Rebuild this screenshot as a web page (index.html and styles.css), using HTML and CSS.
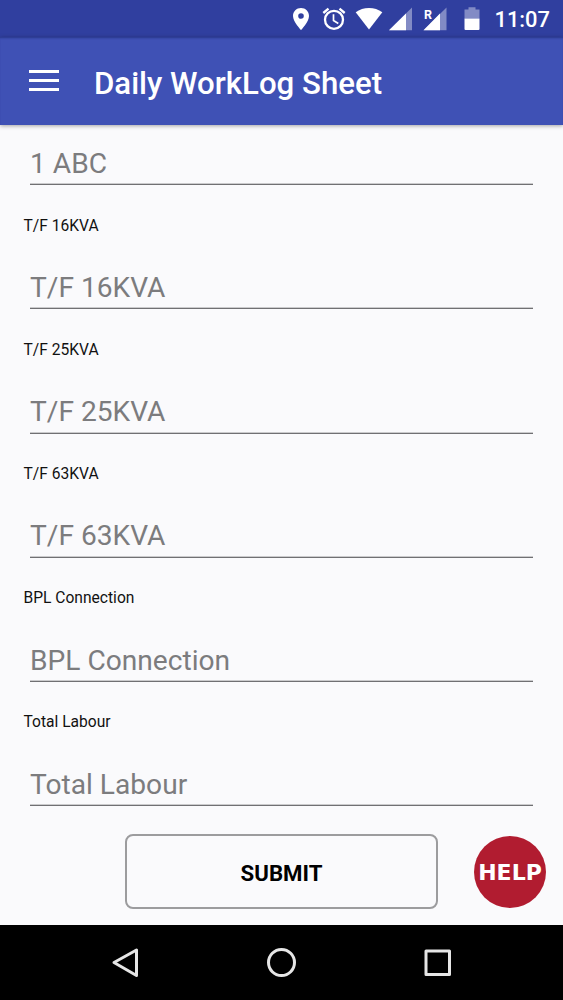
FILE: index.html
```
<!DOCTYPE html>
<html lang="en">
<head>
    <meta charset="UTF-8">
    <meta name="viewport" content="width=device-width, initial-scale=1.0">
    <title>Daily WorkLog Sheet</title>
    <link rel="stylesheet" href="styles.css">
</head>
<body>
    <div class="status-bar">
        <svg class="status-icons" width="204" height="37" viewBox="0 0 204 37" fill="#fff">
            <!-- Location -->
            <path fill-rule="evenodd" d="M17 8c-4.500 0-8 3.500-8 8 0 5.800 8 14 8 14s8-8.200 8-14c0-4.500-3.500-8-8-8zm0 5.200a2.800 2.800 0 1 1 0 5.600 2.800 2.800 0 0 1 0-5.600z"/>
            <!-- Alarm -->
            <g fill="none" stroke="#fff" stroke-width="2.300">
                <circle cx="50" cy="19.800" r="9"/>
                <path d="M49.500 14.200v6.300l4.800 2.900" stroke-width="1.700"/>
                <path d="M39.300 13l5.200-4.400M60.700 13l-5.200-4.400"/>
            </g>
            <!-- Wifi -->
            <path d="M71.700 12.300C79 6.600 91 6.600 98.300 12.300L85 29.600z"/>
            <!-- Signal -->
            <path d="M105 30.300L128 7.500v22.800z" opacity=".4"/>
            <path d="M105 30.300L122 13.500v16.800z"/>
            <!-- Roaming signal -->
            <path d="M139.500 30.300L162.500 7.500v22.800z" opacity=".4"/>
            <path d="M139.500 30.300L156 13.500v16.800z"/>
            <text class="roaming" x="140" y="18.500">R</text>
            <!-- Battery -->
            <path d="M180.500 18.500v-9h4V7.300h7v2.200h4v9z" opacity=".4"/>
            <path d="M180.500 18.500h15V29a1 1 0 0 1-1 1h-13a1 1 0 0 1-1-1z"/>
        </svg>
        <span class="clock">11:07</span>
    </div>

    <header class="toolbar">
        <button class="menu-button" aria-label="Menu">
            <span></span>
            <span></span>
            <span></span>
        </button>
        <h1>Daily WorkLog Sheet</h1>
    </header>

    <form class="worklog-form">
        <input type="text" placeholder="1 ABC">

        <label for="tf16">T/F 16KVA</label>
        <input type="text" id="tf16" placeholder="T/F 16KVA">

        <label for="tf25">T/F 25KVA</label>
        <input type="text" id="tf25" placeholder="T/F 25KVA">

        <label for="tf63">T/F 63KVA</label>
        <input type="text" id="tf63" placeholder="T/F 63KVA">

        <label for="bpl">BPL Connection</label>
        <input type="text" id="bpl" placeholder="BPL Connection">

        <label for="labour">Total Labour</label>
        <input type="text" id="labour" placeholder="Total Labour">

        <div class="actions">
            <button type="button" class="submit-button">SUBMIT</button>
            <button type="button" class="help-button">HELP</button>
        </div>
    </form>

    <nav class="nav-bar">
        <svg width="30" height="32" viewBox="0 0 30 32"><path d="M3 15.500L25.500 3v25.500z"/></svg>
        <svg width="30" height="32" viewBox="0 0 30 32"><circle cx="14.500" cy="15.500" r="13"/></svg>
        <svg width="30" height="32" viewBox="0 0 30 32"><rect x="3" y="4" width="23.500" height="23.500"/></svg>
    </nav>
</body>
</html>
```
FILE: styles.css
```
* {
    box-sizing: border-box;
}

body {
    font-family: Roboto, sans-serif;
    background-color: #fafafc;
    color: #111;
    margin: 0;
    height: 1000px;
    display: flex;
    flex-direction: column;
    overflow: hidden;
}

button {
    border: none;
    background: none;
    padding: 0;
    cursor: pointer;
}

.status-bar {
    height: 37px;
    flex: none;
    background-color: #303f9f;
    color: #fff;
    display: flex;
    align-items: center;
    justify-content: flex-end;
    gap: 6px;
    padding-right: 13px;
}

.clock {
    font-size: 21.9px;
    font-weight: 500;
    line-height: 26px;
    padding-top: 3px;
}

.roaming {
    font-size: 12.5px;
    font-weight: 700;
}

.toolbar {
    height: 88px;
    flex: none;
    background-color: #3f51b5;
    box-shadow: 0 1px 4px rgba(0, 0, 0, 0.35), inset 0 2px 2px -1px rgba(20, 30, 100, 0.5);
    display: flex;
    align-items: center;
    gap: 35px;
    padding-left: 29px;
}

.menu-button {
    width: 30px;
    height: 21px;
    margin-bottom: 1px;
    display: flex;
    flex-direction: column;
    justify-content: space-between;
}

.menu-button span {
    width: 100%;
    height: 3px;
    background-color: #fff;
}

h1 {
    margin: 6px 0 0;
    color: #fff;
    font-size: 31.2px;
    font-weight: 500;
    line-height: 38px;
}

.worklog-form {
    flex: 1;
    display: flex;
    flex-direction: column;
    padding: 16px 30px 0 24px;
}

label {
    font-size: 15.6px;
    line-height: 20px;
    margin: 30.6px 0 29.4px -0.5px;
}

input {
    font-family: inherit;
    font-size: 28.15px;
    height: 44.2px;
    flex: none;
    margin-left: 6px;
    padding: 1.6px 0 0;
    border: none;
    border-bottom: 1px solid #707073;
    box-shadow: inset 0 -1px #cbcbcd;
    border-radius: 0;
    background: none;
    outline: none;
}

input::placeholder {
    color: #7c7c7e;
    opacity: 1;
}

.actions {
    display: flex;
    align-items: center;
    justify-content: flex-end;
    gap: 36px;
    margin: 28px -13px 0 0;
}

.submit-button {
    width: 313px;
    height: 75px;
    padding-top: 2px;
    border: 2px solid #9c9c9e;
    border-radius: 8px;
    color: #000;
    font-family: inherit;
    font-size: 22.2px;
    font-weight: 700;
}

.help-button {
    width: 72px;
    height: 72px;
    padding-top: 2px;
    border-radius: 50%;
    background-color: #b11c30;
    color: #fff;
    font-family: "DejaVu Sans", sans-serif;
    font-size: 22px;
    font-weight: 700;
}

.nav-bar {
    height: 75px;
    flex: none;
    background-color: #000;
    display: flex;
    align-items: center;
    justify-content: space-between;
    padding: 0 110px 0 111px;
}

.nav-bar svg {
    fill: none;
    stroke: #e6e6e6;
    stroke-width: 3;
    stroke-linejoin: round;
}
```
